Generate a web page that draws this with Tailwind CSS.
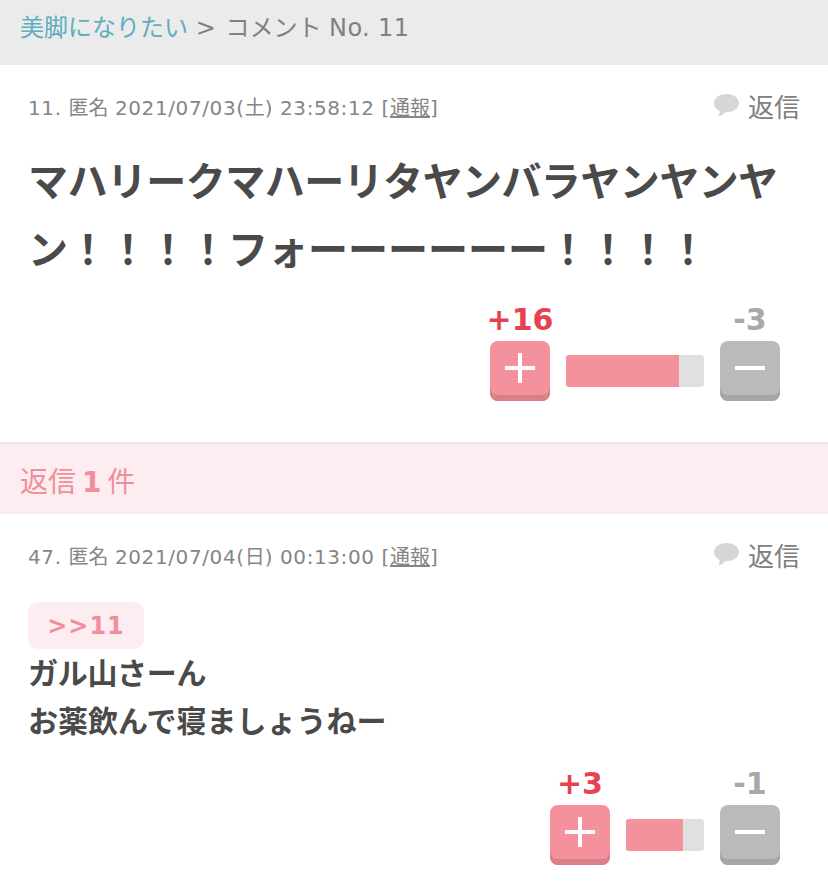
<!DOCTYPE html>
<html lang="ja"><head><meta charset="utf-8"><script src="https://cdn.jsdelivr.net/npm/@tailwindcss/browser@4"></script></head>
<body class="bg-white overflow-hidden font-['DejaVu_Sans','Noto_Sans_CJK_JP',sans-serif]">
<div class="h-[886px] overflow-hidden">
<nav class="h-[65px] bg-[#ebebeb] pl-5 pt-[9px] text-[24px] leading-[38px] text-[#808080]"><span class="text-[#5eaec0]">美脚になりたい</span> <span class="tracking-[1px]">&gt; </span>コメント <span class="tracking-[0.4px]">No. 11</span></nav>

<section class="h-[377px] px-7">
 <div class="flex justify-between pt-[24px] h-[84px]">
  <div class="text-[20px] leading-[38px] text-[#858585]"><span class="tracking-[0.6px]">11. </span>匿名 <span class="tracking-[0.6px]">2021/07/03(</span>土<span class="tracking-[0.6px]">) 23:58:12 [</span><span class="underline">通報</span>]</div>
  <div class="flex items-center h-[38px] gap-[8px] text-[26px] text-[#808080]">
   <svg class="-mt-[5px]" width="27" height="25" viewBox="0 0 28 26"><path d="M14 1C6.800 1 1 4.800 1 10.500c0 3.500 2.300 6.600 5.800 8.400.4 1.500-.3 3.600-1.500 5.300 3-.5 5.600-2.100 7.400-4.300.4 0 .9.100 1.300.100 7.200 0 13-4 13-9.500S21.200 1 14 1z" fill="#d6d6d6"/></svg>
   <span>返信</span>
  </div>
 </div>
 <p class="text-[40px] leading-[68px] font-bold text-[#4a4a4a] -mt-[1px]"><span class="tracking-[-0.55px]">マハリークマハーリタヤンバラヤンヤンヤ</span><br>ン！！！！フォーーーーーー！！！！</p>
 <div class="flex justify-end items-end gap-4 pr-5 mt-[17px]">
  <div class="flex flex-col items-center w-[60px]">
   <span class="text-[30px] leading-[38px] mb-[2px] font-bold text-[#e8414f] whitespace-nowrap">+16</span>
   <div class="w-[60px] h-[60px] rounded-[8px] bg-[#f3929d] shadow-[inset_0_-6px_0_#d97f8a] flex items-center justify-center pb-[6px]">
    <svg width="30" height="30" viewBox="0 0 30 30"><path d="M15 1v28M1 15h28" stroke="#fff" stroke-width="4" stroke-linecap="round"/></svg>
   </div>
  </div>
  <div class="w-[138px] h-8 mb-[14px] rounded-[3px] bg-[#e0e0e0] overflow-hidden"><div class="h-full bg-[#f3929d]" style="width:82%"></div></div>
  <div class="flex flex-col items-center w-[60px]">
   <span class="text-[30px] leading-[38px] mb-[2px] font-bold text-[#a8a8a8]">-3</span>
   <div class="w-[60px] h-[60px] rounded-[8px] bg-[#bababa] shadow-[inset_0_-6px_0_#a6a6a6] flex items-center justify-center pb-[6px]">
    <svg width="30" height="30" viewBox="0 0 30 30"><path d="M1 15h28" stroke="#fff" stroke-width="4" stroke-linecap="round"/></svg>
   </div>
  </div>
 </div>
</section>

<div class="h-[72px] bg-[#fdedf1] border-t-2 border-[#f9e1e6] pl-5 pt-[20px] text-[28px] leading-[38px] text-[#f08f9c] [word-spacing:-3px]">返信 <b>1</b> 件</div>

<section class="px-7">
 <div class="flex justify-between pt-[24px] h-[86px]">
  <div class="text-[20px] leading-[38px] text-[#858585]"><span class="tracking-[0.6px]">47. </span>匿名 <span class="tracking-[0.6px]">2021/07/04(</span>日<span class="tracking-[0.6px]">) 00:13:00 [</span><span class="underline">通報</span>]</div>
  <div class="flex items-center h-[38px] gap-[8px] text-[26px] text-[#808080]">
   <svg class="-mt-[5px]" width="27" height="25" viewBox="0 0 28 26"><path d="M14 1C6.800 1 1 4.800 1 10.500c0 3.500 2.300 6.600 5.800 8.400.4 1.500-.3 3.600-1.500 5.300 3-.5 5.600-2.100 7.400-4.300.4 0 .9.100 1.300.100 7.200 0 13-4 13-9.500S21.200 1 14 1z" fill="#d6d6d6"/></svg>
   <span>返信</span>
  </div>
 </div>
 <div class="flex items-center justify-center w-[116px] h-[47px] mt-[2px] mb-[1px] rounded-[10px] bg-[#fdedf1] text-[24px] tracking-[1px] font-bold text-[#f08f9c]">&gt;&gt;11</div>
 <p class="text-[30px] leading-[48px] font-bold text-[#4a4a4a]"><span class="tracking-[-0.3px]">ガル山さーん</span><br>お薬飲んで寝ましょうねー</p>
 <div class="flex justify-end items-end gap-4 pr-5 mt-[19px]">
  <div class="flex flex-col items-center w-[60px]">
   <span class="text-[30px] leading-[38px] mb-[2px] font-bold text-[#e8414f]">+3</span>
   <div class="w-[60px] h-[60px] rounded-[8px] bg-[#f3929d] shadow-[inset_0_-6px_0_#d97f8a] flex items-center justify-center pb-[6px]">
    <svg width="30" height="30" viewBox="0 0 30 30"><path d="M15 1v28M1 15h28" stroke="#fff" stroke-width="4" stroke-linecap="round"/></svg>
   </div>
  </div>
  <div class="w-[78px] h-8 mb-[14px] rounded-[3px] bg-[#e0e0e0] overflow-hidden"><div class="h-full bg-[#f3929d]" style="width:73%"></div></div>
  <div class="flex flex-col items-center w-[60px]">
   <span class="text-[30px] leading-[38px] mb-[2px] font-bold text-[#a8a8a8]">-1</span>
   <div class="w-[60px] h-[60px] rounded-[8px] bg-[#bababa] shadow-[inset_0_-6px_0_#a6a6a6] flex items-center justify-center pb-[6px]">
    <svg width="30" height="30" viewBox="0 0 30 30"><path d="M1 15h28" stroke="#fff" stroke-width="4" stroke-linecap="round"/></svg>
   </div>
  </div>
 </div>
</section>
</div>
</body></html>
